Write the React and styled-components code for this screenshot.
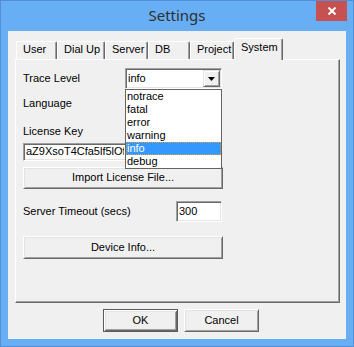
import React from 'react';
import styled, { createGlobalStyle } from 'styled-components';

const Global = createGlobalStyle`
  html, body { margin: 0; padding: 0; background: #ffffff; }
  body { font-family: "Liberation Sans", Arial, sans-serif; }
  *, *::before, *::after { box-sizing: border-box; }
`;

const Window = styled.div`
  width: 354px;
  height: 347px;
  background: #67aef4;
  border: 1px solid #5190d8;
  padding: 0 7px 7px 7px;
  display: flex;
  flex-direction: column;
`;

const TitleBar = styled.div`
  height: 30px;
  margin: 0 -7px;
  display: grid;
  grid-template-columns: 1fr auto 1fr;
  align-items: start;
`;

const Title = styled.div`
  grid-column: 2;
  font-family: "Noto Sans", "Open Sans", sans-serif;
  font-size: 15px;
  line-height: 29px;
  color: #2f2f2f;
`;

const CloseButton = styled.div`
  grid-column: 3;
  justify-self: end;
  width: 31px;
  height: 20px;
  margin-right: 6px;
  background: #c75050;
  display: flex;
  align-items: center;
  justify-content: center;
`;

const Client = styled.div`
  height: 308px;
  background: #f0f0f0;
  display: flex;
  flex-direction: column;
  padding-top: 7px;
  font-size: 11px;
  color: #000;
`;

const TabStrip = styled.div`
  display: flex;
  align-items: flex-end;
  height: 21px;
  padding-left: 8px;
  position: relative;
  z-index: 2;
`;

const Tab = styled.div`
  position: relative;
  width: ${p => p.$w}px;
  height: ${p => (p.$active ? 22 : 18)}px;
  margin-bottom: ${p => (p.$active ? -1 : 0)}px;
  padding: ${p => (p.$active ? '2px 0 0 6px' : '1px 0 0 6px')};
  background: #f0f0f0;
  border-top: 1px solid #ffffff;
  border-left: 1px solid #ffffff;
  border-right: 1px solid #696969;
  box-shadow: inset -1px 0 0 #a0a0a0;
  border-top-left-radius: 2px;
  border-top-right-radius: 2px;
  line-height: 13px;
  white-space: nowrap;
`;

const Panel = styled.div`
  margin-left: 7px;
  width: 325px;
  height: 244px;
  border-top: 1px solid #ffffff;
  border-left: 1px solid #ffffff;
  border-right: 1px solid #696969;
  border-bottom: 1px solid #696969;
  box-shadow: inset -1px -1px 0 #a0a0a0;
  padding: 8px 0 0 7px;
  display: flex;
  flex-direction: column;
  align-items: flex-start;
`;

const FormRow = styled.div`
  display: flex;
  align-items: center;
  height: ${p => p.$h}px;
  margin-top: ${p => p.$mt || 0}px;
`;

const Label = styled.div`
  width: ${p => p.$w || 102}px;
  line-height: 13px;
  white-space: nowrap;
  margin-top: ${p => p.$mt || 0}px;
`;

const Sunken = styled.div`
  width: ${p => p.$w}px;
  height: ${p => p.$h}px;
  margin-top: ${p => p.$mt || 0}px;
  background: #ffffff;
  border-style: solid;
  border-width: 1px;
  border-color: #a0a0a0 #ffffff #ffffff #a0a0a0;
  box-shadow: inset 1px 1px 0 #696969, inset -1px -1px 0 #e3e3e3;
  padding: 0 2px 0 2px;
  line-height: ${p => p.$h - 3}px;
  overflow: hidden;
  white-space: nowrap;
`;

const ClippedText = styled.div`
  width: ${p => p.$w}px;
  overflow: hidden;
  white-space: nowrap;
`;

const Combo = styled.div`
  position: relative;
  width: 97px;
  height: 21px;
  background: #ffffff;
  border-style: solid;
  border-width: 1px;
  border-color: #a0a0a0 #ffffff #ffffff #a0a0a0;
  box-shadow: inset 1px 1px 0 #696969, inset -1px -1px 0 #e3e3e3;
  display: flex;
  align-items: center;
  padding: 1px 1px 1px 2px;
  z-index: ${p => (p.$open ? 5 : 1)};
`;

const ComboText = styled.div`
  flex: 1;
  line-height: 13px;
`;

const ComboArrow = styled.div`
  width: 17px;
  height: 17px;
  background: #f0f0f0;
  border-style: solid;
  border-width: 1px;
  border-color: #e3e3e3 #696969 #696969 #e3e3e3;
  box-shadow: inset 1px 1px 0 #ffffff, inset -1px -1px 0 #a0a0a0;
  display: flex;
  align-items: center;
  justify-content: center;
`;

const DropList = styled.div`
  position: absolute;
  top: 20px;
  left: -1px;
  width: 97px;
  background: #ffffff;
  border: 1px solid #646464;
  display: flex;
  flex-direction: column;
`;

const DropItem = styled.div`
  height: 13px;
  line-height: 11px;
  padding-left: 0;
  background: ${p => (p.$sel ? '#3399ff' : '#ffffff')};
  color: ${p => (p.$sel ? '#ffffff' : '#000000')};
  border: 1px dotted ${p => (p.$sel ? '#e39a4a' : 'transparent')};
  white-space: nowrap;
`;

const Button = styled.div`
  width: ${p => p.$w}px;
  height: ${p => p.$h}px;
  margin-top: ${p => p.$mt || 0}px;
  background: #f0f0f0;
  border-style: solid;
  border-width: 1px;
  border-color: ${p => (p.$default ? '#5a5a5a' : '#ffffff #696969 #696969 #ffffff')};
  box-shadow: ${p =>
    p.$default
      ? 'inset 1px 1px 0 #ffffff, inset -1px -1px 0 #696969, inset 2px 2px 0 #e3e3e3, inset -2px -2px 0 #a0a0a0'
      : 'inset 1px 1px 0 #e3e3e3, inset -1px -1px 0 #a0a0a0'};
  display: flex;
  align-items: center;
  justify-content: center;
  line-height: 13px;
  padding-bottom: 1px;
`;

const ButtonRow = styled.div`
  display: flex;
  gap: 6px;
  margin-top: 6px;
  padding-left: 95px;
`;

const TABS = [
  { label: 'User', w: 41 },
  { label: 'Dial Up', w: 48 },
  { label: 'Server', w: 43 },
  { label: 'DB', w: 42 },
  { label: 'Project', w: 44 },
  { label: 'System', w: 49, active: true },
];

const LEVELS = ['notrace', 'fatal', 'error', 'warning', 'info', 'debug'];

const Arrow = () => (
  <svg width="7" height="4" viewBox="0 0 7 4">
    <path d="M0 0H7L3.5 4Z" fill="#000" />
  </svg>
);

export default function App() {
  return (
    <>
      <Global />
      <Window>
        <TitleBar>
          <Title>Settings</Title>
          <CloseButton>
            <svg width="10" height="8" viewBox="0 0 10 8">
              <path d="M1.5 0.5L8.5 7.5M8.5 0.5L1.5 7.5" stroke="#fff" strokeWidth="2" />
            </svg>
          </CloseButton>
        </TitleBar>
        <Client>
          <TabStrip>
            {TABS.map(t => (
              <Tab key={t.label} $w={t.w} $active={t.active}>
                {t.label}
              </Tab>
            ))}
          </TabStrip>
          <Panel>
            <FormRow $h={21}>
              <Label>Trace Level</Label>
              <Combo $open>
                <ComboText>info</ComboText>
                <ComboArrow>
                  <Arrow />
                </ComboArrow>
                <DropList>
                  {LEVELS.map(l => (
                    <DropItem key={l} $sel={l === 'info'}>
                      {l}
                    </DropItem>
                  ))}
                </DropList>
              </Combo>
            </FormRow>
            <FormRow $h={21} $mt={4}>
              <Label>Language</Label>
              <Combo>
                <ComboText />
                <ComboArrow>
                  <Arrow />
                </ComboArrow>
              </Combo>
            </FormRow>
            <Label $mt={11}>License Key</Label>
            <Sunken $w={199} $h={18} $mt={5}>
              <ClippedText $w={98}>aZ9XsoT4Cfa5lf5lOf3kQ7wP2mN8rT1vB6yH4</ClippedText>
            </Sunken>
            <Button $w={200} $h={22} $mt={6}>Import License File...</Button>
            <FormRow $h={21} $mt={12}>
              <Label $w={153}>Server Timeout (secs)</Label>
              <Sunken $w={46} $h={21}>300</Sunken>
            </FormRow>
            <Button $w={200} $h={23} $mt={14}>Device Info...</Button>
          </Panel>
          <ButtonRow>
            <Button $w={75} $h={23} $default>OK</Button>
            <Button $w={75} $h={23}>Cancel</Button>
          </ButtonRow>
        </Client>
      </Window>
    </>
  );
}
